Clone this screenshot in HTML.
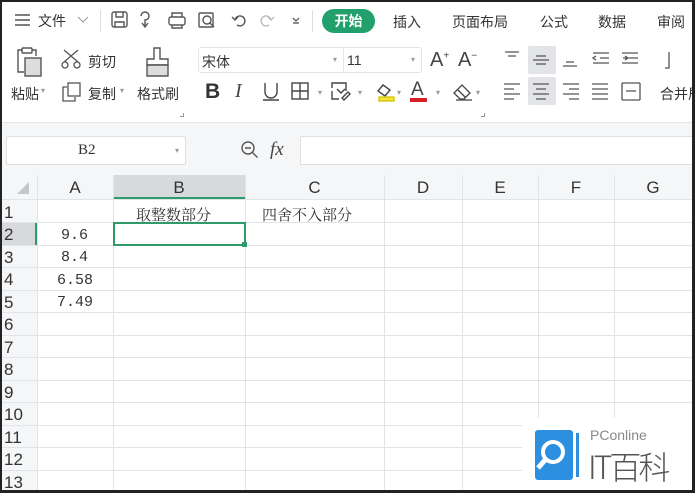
<!DOCTYPE html>
<html><head><meta charset="utf-8"><style>
*{margin:0;padding:0;box-sizing:border-box}
body{width:695px;height:493px;overflow:hidden;background:#fff;position:relative;font-family:"Liberation Sans","Noto Sans CJK SC",sans-serif;color:#333}
.a{position:absolute;white-space:nowrap}
.t{font-size:14px;color:#333}
.s{font-family:"Liberation Serif","Noto Serif CJK SC",serif;font-size:15px;color:#333}
.m{font-family:"Liberation Mono",monospace;font-size:15px;color:#333}
.hl{position:absolute;left:0;width:695px;height:1px;background:#e1e3e6}
.vl{position:absolute;top:175px;width:1px;height:318px;background:#e1e3e6}
.rn{position:absolute;left:4px;width:30px;font-size:17px;color:#333}
.ch{position:absolute;top:178px;font-size:17px;color:#333;text-align:center}
svg{position:absolute}
</style></head><body>
<div class="a" style="left:0;top:0;width:695px;height:2px;background:#222"></div>
<div class="a" style="left:0;top:0;width:2px;height:493px;background:#222;z-index:5"></div>
<div class="a" style="left:692px;top:0;width:3px;height:493px;background:#222;z-index:5"></div>
<div class="a" style="left:0;top:490px;width:695px;height:3px;background:#222;z-index:5"></div>

<svg style="left:14px;top:13px" width="18" height="14"><path d="M1 2h15M1 7h15M1 12h15" stroke="#555" stroke-width="1.5"/></svg>
<div class="a t" style="left:38px;top:11px">文件</div>
<svg style="left:77px;top:16px" width="12" height="8"><path d="M1 1l5 5 5-5" stroke="#999" fill="none"/></svg>
<div class="a" style="left:100px;top:10px;width:1px;height:22px;background:#ddd"></div>
<svg style="left:111px;top:11px" width="200" height="20" fill="none" stroke="#555" stroke-width="1.4">
<rect x="1" y="1" width="15" height="15" rx="2"/><path d="M5 1v5h7V1M4 16v-5h9v5"/>
<path d="M30 5a4 4 0 1 1 4 4v7M31 12l3 4 3-4"/>
<rect x="58" y="6" width="16" height="8" rx="2"/><path d="M61 6V2h10v4M61 14v3h10v-3"/>
<rect x="88" y="2" width="14" height="14" rx="1"/><circle cx="96" cy="9" r="4"/><path d="M99 12l4 4"/>
<path d="M124 9a5 5 0 1 1 2 5M121 6l3 3 3-3"/>
<path d="M160 9a5 5 0 1 0-2 5M163 6l-3 3-3-3" stroke="#bbb"/>
<path d="M182 7l3 3 3-3M182 12h6" stroke="#666"/>
</svg>
<div class="a" style="left:312px;top:10px;width:1px;height:22px;background:#ddd"></div>
<div class="a" style="left:322px;top:9px;width:53px;height:24px;border-radius:12px;background:#22a06b;color:#fff;font-size:14px;font-weight:bold;text-align:center;line-height:24px">开始</div>
<div class="a t" style="left:393px;top:12px">插入</div>
<div class="a t" style="left:452px;top:12px">页面布局</div>
<div class="a t" style="left:540px;top:12px">公式</div>
<div class="a t" style="left:598px;top:12px">数据</div>
<div class="a t" style="left:657px;top:12px">审阅</div>

<svg style="left:16px;top:47px" width="30" height="32" fill="none" stroke="#555" stroke-width="1.4"><path d="M6 3H2v22h6"/><rect x="6" y="1" width="10" height="5" rx="1"/><path d="M16 3h4v6"/><rect x="9" y="11" width="16" height="18" fill="#ddd"/></svg>
<div class="a t" style="left:11px;top:84px">粘贴</div><div class="a" style="left:41px;top:86px;font-size:8px;color:#999">▾</div>
<svg style="left:61px;top:49px" width="22" height="20" fill="none" stroke="#555" stroke-width="1.3"><path d="M3 1l14 12M17 1L3 13"/><circle cx="4" cy="16" r="3"/><circle cx="16" cy="16" r="3"/></svg>
<div class="a t" style="left:88px;top:52px">剪切</div>
<svg style="left:62px;top:82px" width="20" height="20" fill="none" stroke="#555" stroke-width="1.3"><path d="M5 5H1v14h12v-4"/><rect x="6" y="1" width="12" height="13"/></svg>
<div class="a t" style="left:88px;top:84px">复制</div><div class="a" style="left:120px;top:86px;font-size:8px;color:#999">▾</div>
<svg style="left:144px;top:47px" width="28" height="32" fill="none" stroke="#555" stroke-width="1.4"><path d="M10 1h6v11h8v6H3v-6h7z"/><path d="M3 18h21v11H3z" fill="#ddd"/></svg>
<div class="a t" style="left:137px;top:84px">格式刷</div>
<div class="a" style="left:180px;top:113px;width:4px;height:4px;border-right:1px solid #999;border-bottom:1px solid #999"></div>

<div class="a" style="left:198px;top:47px;width:224px;height:26px;border:1px solid #e5e5e5;border-radius:3px;background:#fff"></div>
<div class="a" style="left:343px;top:48px;width:1px;height:24px;background:#e5e5e5"></div>
<div class="a t" style="left:202px;top:52px">宋体</div>
<div class="a" style="left:333px;top:55px;font-size:8px;color:#999">▾</div>
<div class="a t" style="left:347px;top:52px">11</div>
<div class="a" style="left:411px;top:55px;font-size:8px;color:#999">▾</div>
<div class="a" style="left:430px;top:49px;font-size:20px;color:#444">A<sup style="font-size:10px">+</sup></div>
<div class="a" style="left:458px;top:49px;font-size:20px;color:#444">A<sup style="font-size:10px">−</sup></div>
<div class="a" style="left:205px;top:80px;font-size:21px;font-weight:bold;color:#333">B</div>
<div class="a" style="left:235px;top:80px;font-size:20px;font-style:italic;color:#444;font-family:'Liberation Serif',serif">I</div>
<svg style="left:262px;top:82px" width="18" height="20" fill="none" stroke="#444" stroke-width="1.4"><path d="M3 1v9a6 6 0 0 0 12 0V1M1 18h16"/></svg>
<svg style="left:291px;top:82px" width="110" height="20" fill="none" stroke="#444" stroke-width="1.4">
<rect x="1" y="1" width="16" height="16"/><path d="M9 1v16M1 9h16"/>
<path d="M41 6V1h14v8M41 9v8h7M46 7l4 4 4-4M51 16l6-6 2 2-6 6z"/>
<path d="M92 3l7 5-5 6-7-5z"/><rect x="88" y="15" width="15" height="4" fill="#f3e43a" stroke="#d8c50f"/>
</svg>
<div class="a" style="left:318px;top:88px;font-size:8px;color:#999">▾</div>
<div class="a" style="left:358px;top:88px;font-size:8px;color:#999">▾</div>
<div class="a" style="left:397px;top:88px;font-size:8px;color:#999">▾</div>
<div class="a" style="left:411px;top:79px;font-size:19px;color:#444">A</div>
<div class="a" style="left:410px;top:98px;width:17px;height:4px;background:#d91f26"></div>
<div class="a" style="left:436px;top:88px;font-size:8px;color:#999">▾</div>
<svg style="left:452px;top:83px" width="22" height="18" fill="none" stroke="#444" stroke-width="1.3"><path d="M2 10l8-8 8 8-6 6H8z"/><path d="M6 7l8 8" /><path d="M4 17h16"/></svg>
<div class="a" style="left:476px;top:88px;font-size:8px;color:#999">▾</div>
<div class="a" style="left:481px;top:113px;width:4px;height:4px;border-right:1px solid #999;border-bottom:1px solid #999"></div>

<div class="a" style="left:528px;top:46px;width:28px;height:28px;background:#e2e4e7;border-radius:2px"></div>
<div class="a" style="left:528px;top:77px;width:28px;height:28px;background:#e2e4e7;border-radius:2px"></div>
<svg style="left:502px;top:49px" width="170" height="56" fill="none" stroke="#555" stroke-width="1.3">
<path d="M3 3h14M6 7h8"/>
<path d="M31 11h16M34 7h10M34 15h10"/>
<path d="M61 17h14M64 13h8"/>
<path d="M91 4h16M98 9h9M91 14h16M94 7l-3 2 3 2"/>
<path d="M120 4h16M127 9h9M120 14h16M121 9h5M123 7l3 2-3 2"/>
<path d="M2 35h16M2 40h10M2 45h16M2 50h10"/>
<path d="M31 35h16M34 40h10M31 45h16M34 50h10"/>
<path d="M61 35h16M67 40h10M61 45h16M67 50h10"/>
<path d="M90 35h16M90 40h16M90 45h16M90 50h16"/>
<path d="M120 34v17M138 34v17M120 34h18M120 51h18M124 42h10"/>
<path d="M167 3v16h-4"/>
</svg>
<div class="a t" style="left:660px;top:84px">合并居</div>

<div class="a" style="left:0;top:122px;width:695px;height:1px;background:#e3e3e3"></div>
<div class="a" style="left:0;top:123px;width:695px;height:52px;background:#f5f6f7"></div>
<div class="a" style="left:6px;top:136px;width:180px;height:29px;background:#fff;border:1px solid #e0e0e0;border-radius:2px"></div>
<div class="a" style="left:78px;top:142px;font-size:15px;font-family:'Liberation Serif',serif;color:#333">B2</div>
<div class="a" style="left:175px;top:146px;font-size:8px;color:#999">▾</div>
<svg style="left:240px;top:140px" width="20" height="20" fill="none" stroke="#555" stroke-width="1.4"><circle cx="8" cy="8" r="6"/><path d="M5 8h6M12.5 12.5l5 5"/></svg>
<div class="a" style="left:270px;top:139px;font-size:19px;font-style:italic;font-family:'Liberation Serif',serif;color:#444">fx</div>
<div class="a" style="left:300px;top:136px;width:395px;height:29px;background:#fff;border:1px solid #e0e0e0"></div>

<div class="a" style="left:0;top:175px;width:695px;height:24px;background:#f5f6f7"></div>
<div class="a" style="left:0;top:175px;width:37px;height:318px;background:#f5f6f7"></div>
<div class="a" style="left:113px;top:175px;width:132px;height:24px;background:#d7d9dc"></div>
<div class="a" style="left:113px;top:197px;width:132px;height:2px;background:#2d9b68"></div>
<div class="a" style="left:0;top:222px;width:37px;height:23px;background:#d7d9dc"></div>
<div class="a" style="left:35px;top:222px;width:2px;height:23px;background:#2d9b68"></div>
<svg style="left:16px;top:181px" width="14" height="14"><path d="M13 1v12H1z" fill="#c4c6c9"/></svg>

<div class="hl" style="top:199px"></div><div class="hl" style="top:222px"></div><div class="hl" style="top:245px"></div>
<div class="hl" style="top:267px"></div><div class="hl" style="top:290px"></div><div class="hl" style="top:312px"></div>
<div class="hl" style="top:335px"></div><div class="hl" style="top:357px"></div><div class="hl" style="top:380px"></div>
<div class="hl" style="top:402px"></div><div class="hl" style="top:425px"></div><div class="hl" style="top:447px"></div>
<div class="hl" style="top:470px"></div>
<div class="vl" style="left:37px"></div><div class="vl" style="left:113px"></div><div class="vl" style="left:245px"></div>
<div class="vl" style="left:384px"></div><div class="vl" style="left:462px"></div><div class="vl" style="left:538px"></div>
<div class="vl" style="left:614px"></div>

<div class="ch" style="left:37px;width:76px">A</div>
<div class="ch" style="left:113px;width:132px">B</div>
<div class="ch" style="left:245px;width:139px">C</div>
<div class="ch" style="left:384px;width:78px">D</div>
<div class="ch" style="left:462px;width:76px">E</div>
<div class="ch" style="left:538px;width:76px">F</div>
<div class="ch" style="left:614px;width:78px">G</div>

<div class="rn" style="top:203px">1</div><div class="rn" style="top:225px">2</div><div class="rn" style="top:248px">3</div>
<div class="rn" style="top:270px">4</div><div class="rn" style="top:293px">5</div><div class="rn" style="top:315px">6</div>
<div class="rn" style="top:338px">7</div><div class="rn" style="top:360px">8</div><div class="rn" style="top:383px">9</div>
<div class="rn" style="top:405px">10</div><div class="rn" style="top:428px">11</div><div class="rn" style="top:450px">12</div>
<div class="rn" style="top:473px">13</div>

<div class="a s" style="left:136px;top:204px">取整数部分</div>
<div class="a s" style="left:262px;top:204px">四舍不入部分</div>
<div class="a m" style="left:61px;top:227px">9.6</div>
<div class="a m" style="left:61px;top:249px">8.4</div>
<div class="a m" style="left:57px;top:272px">6.58</div>
<div class="a m" style="left:57px;top:294px">7.49</div>

<div class="a" style="left:113px;top:222px;width:133px;height:24px;border:2px solid #2d9b68"></div>
<div class="a" style="left:242px;top:242px;width:5px;height:5px;background:#2d9b68"></div>

<div class="a" style="left:522px;top:418px;width:170px;height:72px;background:#fff"></div>
<svg style="left:535px;top:430px" width="48" height="52"><rect x="0" y="0" width="38" height="50" rx="3" fill="#2c8fe0"/><rect x="41" y="3" width="3" height="44" fill="#2c8fe0"/><circle cx="18" cy="22" r="10" fill="none" stroke="#fff" stroke-width="4"/><path d="M11 29l-8 9" stroke="#fff" stroke-width="5"/></svg>
<div class="a" style="left:590px;top:427px;font-size:14px;color:#888">PConline</div>
<div class="a" style="left:588px;top:446px;font-size:32px;line-height:40px;color:#555;letter-spacing:-3px;font-weight:300;font-family:'Noto Sans CJK SC',sans-serif">IT百科</div>
</body></html>
